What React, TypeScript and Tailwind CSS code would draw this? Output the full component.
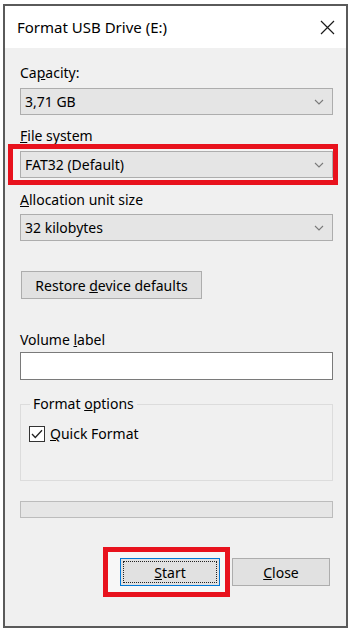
import React from "react";

const font = { fontFamily: "'Noto Sans', 'Open Sans', sans-serif" };

function Chevron() {
  return (
    <svg width="10" height="6" viewBox="0 0 10 6" className="shrink-0">
      <path d="M1 1 L5 5 L9 1" fill="none" stroke="#7a7a7a" strokeWidth="1.1" />
    </svg>
  );
}

function Combo({ value }: { value: string }) {
  return (
    <div className="h-[27px] w-[313px] border border-[#adadad] bg-[#e5e5e5] flex items-center justify-between pl-[4px] pr-[8px] text-[14px] text-black">
      <span>{value}</span>
      <Chevron />
    </div>
  );
}

export default function App() {
  return (
    <div className="w-[355px] h-[639px] bg-white pt-[4px] pl-[3px]" style={font}>
      <div className="w-[345px] h-[624px] border-2 border-[#5a5a5a] bg-[#f0f0f0] flex flex-col">
        {/* title bar */}
        <div className="h-[42px] bg-white flex items-center justify-between pl-[12px] pr-[11px]">
          <span className="text-[15px] text-black">Format USB Drive (E:)</span>
          <svg width="15" height="15" viewBox="0 0 15 15">
            <path d="M1 1 L14 14 M14 1 L1 14" stroke="#1a1a1a" strokeWidth="1.2" />
          </svg>
        </div>

        <div className="flex flex-col pl-[15px] pr-[13px] text-[14px] text-black">
          <div className="mt-[15px] h-[20px] leading-[20px]">
            Ca<span className="underline">p</span>acity:
          </div>
          <div className="mt-[5px]">
            <Combo value="3,71 GB" />
          </div>

          <div className="mt-[13px] h-[16px] leading-[16px]">
            <span className="underline">F</span>ile system
          </div>
          <div className="ml-[-12px] w-[330px] border-[5px] border-[#e8121d] bg-[#f4f4f4] pl-[7px] py-[2px]">
            <Combo value="FAT32 (Default)" />
          </div>

          <div className="mt-[7px] h-[16px] leading-[16px]">
            <span className="underline">A</span>llocation unit size
          </div>
          <div className="mt-[6px]">
            <Combo value="32 kilobytes" />
          </div>

          <div className="mt-[30px] ml-[1px] w-[181px] h-[28px] border border-[#adadad] bg-[#e1e1e1] flex items-center justify-center">
            <span>
              Restore <span className="underline">d</span>evice defaults
            </span>
          </div>

          <div className="mt-[33px] h-[16px] leading-[16px]">
            Volume <span className="underline">l</span>abel
          </div>
          <div className="mt-[4px] w-[313px] h-[28px] border border-[#7a7a7a] bg-white" />

          <fieldset className="mt-[16px] w-[313px] h-[85px] border border-[#dcdcdc] pl-[8px]">
            <legend className="px-[3px] ml-[1px] leading-[16px]">
              Format <span className="underline">o</span>ptions
            </legend>
            <div className="mt-[11px] flex items-center gap-[5px]">
              <div className="w-[16px] h-[16px] border border-[#333] bg-white flex items-center justify-center">
                <svg width="12" height="10" viewBox="0 0 12 10">
                  <path d="M1 5 L4.3 8.5 L11 1.2" fill="none" stroke="#222" strokeWidth="1.3" />
                </svg>
              </div>
              <span>
                <span className="underline">Q</span>uick Format
              </span>
            </div>
          </fieldset>

          <div className="mt-[20px] w-[313px] h-[17px] border border-[#bcbcbc] bg-[#e6e6e6]" />

          <div className="mt-[29px] mr-[3px] flex justify-end items-start">
            <div className="border-[5px] border-[#e8121d] bg-[#f7f7f7] pl-[12px] pr-[5px] py-[6px]">
              <div className="w-[100px] h-[28px] border border-[#0078d7] bg-[#e1e1e1] p-[2px]">
                <div className="w-full h-full border border-dotted border-[#222] flex items-center justify-center">
                  <span>
                    <span className="underline">S</span>tart
                  </span>
                </div>
              </div>
            </div>
            <div className="ml-[2px] mt-[11px] w-[98px] h-[28px] border border-[#adadad] bg-[#e1e1e1] flex items-center justify-center">
              <span>
                <span className="underline">C</span>lose
              </span>
            </div>
          </div>
        </div>
      </div>
    </div>
  );
}
